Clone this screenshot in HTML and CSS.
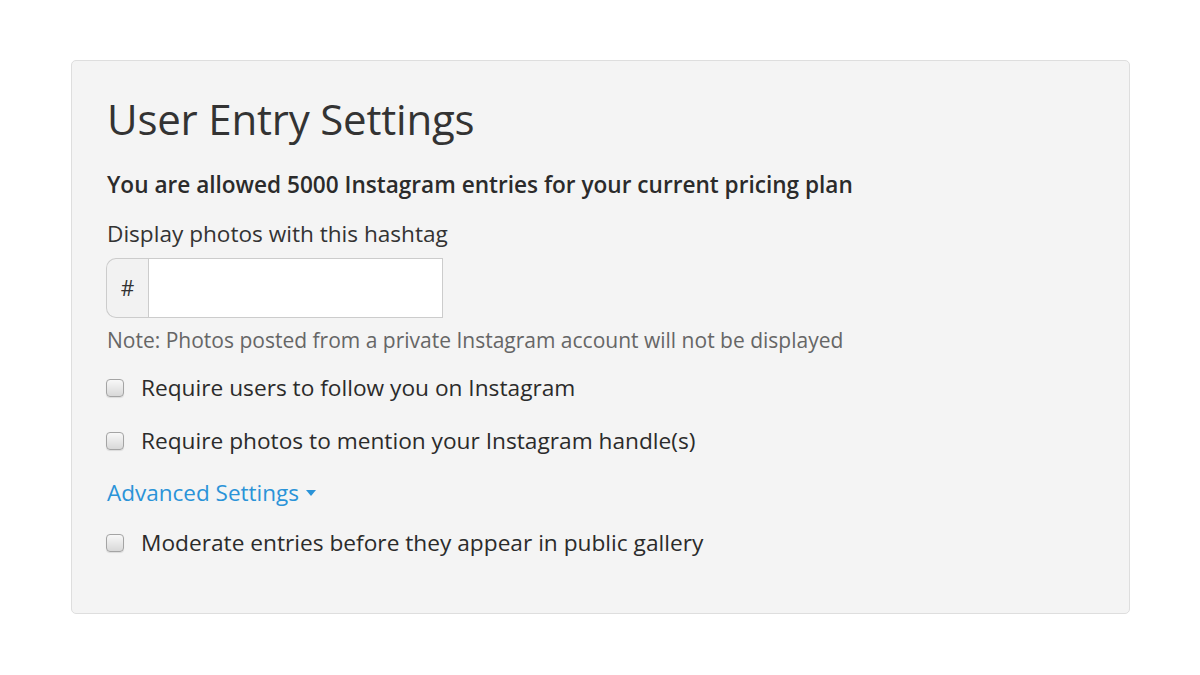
FILE: index.html
```html
<!DOCTYPE html>
<html lang="en">
<head>
  <meta charset="UTF-8">
  <title>User Entry Settings</title>
  <link rel="stylesheet" href="styles.css">
</head>
<body>

  <main>
    <section class="panel">
      <h1>User Entry Settings</h1>
      <p class="plan-note">You are allowed 5000 Instagram entries for your current pricing plan</p>

      <label class="field-label" for="hashtag">Display photos with this hashtag</label>
      <div class="input-group">
        <span class="addon">#</span>
        <input type="text" id="hashtag">
      </div>
      <p class="help">Note: Photos posted from a private Instagram account will not be displayed</p>

      <label class="check"><span class="box"></span>Require users to follow you on Instagram</label>
      <label class="check"><span class="box"></span>Require photos to mention your Instagram handle(s)</label>

      <a class="advanced" href="#">Advanced Settings <span class="caret"></span></a>

      <label class="check"><span class="box"></span>Moderate entries before they appear in public gallery</label>
    </section>
  </main>

</body>
</html>
```

FILE: styles.css
```css
* { box-sizing: border-box; margin: 0; padding: 0; }

body {
  font-family: 'Open Sans', 'Noto Sans', sans-serif;
  background: #fff;
  color: #333;
}

main {
  padding: 60px 70px 0 71px;
}

.panel {
  background: #f4f4f4;
  border: 1px solid #dedede;
  border-radius: 5px;
  padding: 28px 35px 52px;
  display: flex;
  flex-direction: column;
  align-items: flex-start;
  height: 554px;
}

.panel h1 {
  font-size: 42px;
  font-weight: 400;
  line-height: 60px;
  color: #333;
  letter-spacing: -0.2px;
}

.plan-note {
  font-size: 22.6px;
  font-weight: 600;
  line-height: 28px;
  margin-top: 22px;
  color: #2b2b2b;
}

.field-label {
  font-size: 22.6px;
  line-height: 28px;
  margin-top: 21px;
  color: #333;
}

.input-group {
  display: flex;
  margin-top: 10px;
  margin-left: -1px;
  height: 60px;
  width: 337px;
}

.addon {
  width: 42px;
  display: flex;
  align-items: center;
  justify-content: center;
  font-size: 21px;
  background: #f2f2f2;
  border: 1px solid #ccc;
  border-right: none;
  border-radius: 10px 0 0 10px;
  color: #333;
}

.input-group input {
  flex: 1;
  border: 1px solid #ccc;
  background: #fff;
  font-size: 20px;
  font-family: inherit;
  padding: 0 12px;
}

.help {
  font-size: 21px;
  line-height: 28px;
  margin-top: 8px;
  color: #666;
}

.check {
  display: flex;
  align-items: center;
  font-size: 22.7px;
  line-height: 28px;
  margin-top: 20px;
  color: #2b2b2b;
}

.check + .check {
  margin-top: 25px;
}

.box {
  flex: none;
  width: 18px;
  height: 18px;
  border: 1px solid #a4a4a4;
  border-radius: 4px;
  background: linear-gradient(#f8f8f8, #d8d8d8);
  box-shadow: 0 1px 1px rgba(0,0,0,0.1);
  margin-right: 17px;
  margin-left: -1px;
}

.advanced {
  font-size: 22.5px;
  line-height: 28px;
  color: #2a93d8;
  text-decoration: none;
  margin-top: 24px;
  display: flex;
  align-items: center;
}

.caret {
  display: inline-block;
  width: 0;
  height: 0;
  margin-left: 7px;
  border-left: 5px solid transparent;
  border-right: 5px solid transparent;
  border-top: 6px solid #2a93d8;
}

.advanced + .check {
  margin-top: 22px;
}
```
